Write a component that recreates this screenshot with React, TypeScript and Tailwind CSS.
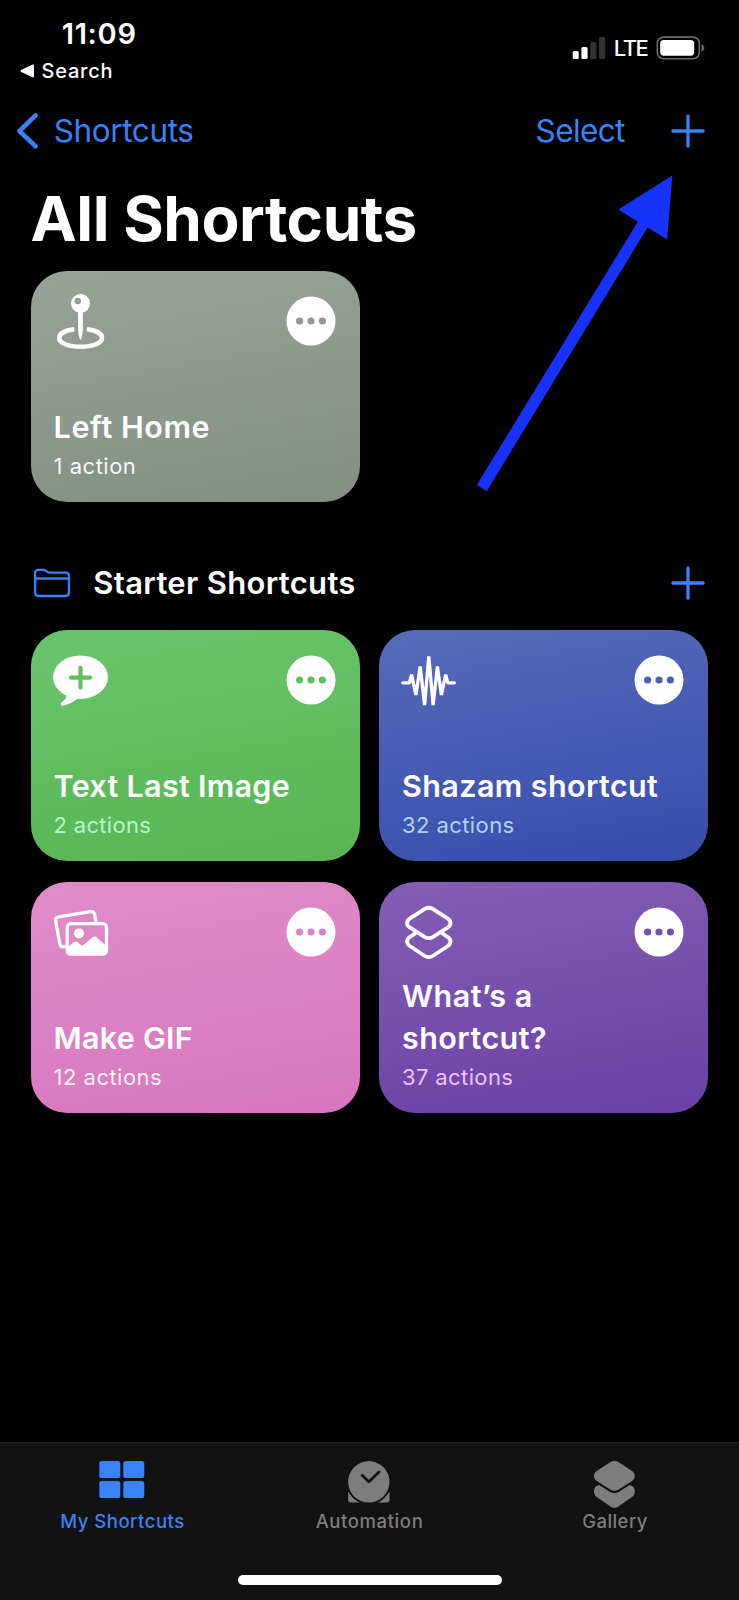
import React from "react";

function PlusIcon() {
  return (
    <svg className="h-[34px] w-[34px] text-[#3a82f7]" viewBox="0 0 34 34" fill="none" stroke="currentColor" strokeWidth="3.3" strokeLinecap="round">
      <path d="M17 1.9V32.1M1.9 17H32.1" />
    </svg>
  );
}

function PinIcon() {
  return (
    <svg className="h-[58px] w-[58px]" viewBox="52 292 58 58">
      <path fillRule="evenodd" fill="#fff" d="M80.5 294a9.5 9.5 0 1 1 0 19a9.5 9.5 0 1 1 0-19ZM77.8 297.8a3.2 3.2 0 1 0 0 6.4a3.2 3.2 0 1 0 0-6.4Z" />
      <path fill="#fff" d="M78.1 311h4.8V327.5C82.9 333 81.8 339.7 80.5 339.7S78.1 333 78.1 327.5Z" />
      <path fill="none" stroke="#fff" strokeWidth="4.5" d="M74.3 329.3C65 330.4 59.2 333.7 59.2 337.9C59.2 343 68.5 346.8 80.6 346.8S102 343 102 337.9C102 333.7 96.2 330.4 86.9 329.3" />
    </svg>
  );
}

function BubbleIcon() {
  return (
    <svg className="h-[58px] w-[58px]" viewBox="52 650.8 58 58">
      <ellipse cx="80.5" cy="677" rx="27.4" ry="21.8" fill="#fff" />
      <path fill="#fff" d="M64 690C69 696.5 65 699 61.4 702.3C59.8 704 61 706.2 64.5 705.3C70 703.8 74.5 700.3 78.5 698L82 692Z" />
      <path fill="none" stroke="#61bf60" strokeWidth="4.2" strokeLinecap="round" d="M80.5 667.7V687.3M70.9 677.4H90.1" />
    </svg>
  );
}

function WaveIcon() {
  return (
    <svg className="h-[58px] w-[58px]" viewBox="400.4 650.8 58 58">
      <path fill="none" stroke="#fff" strokeWidth="3.3" strokeLinecap="round" strokeLinejoin="bevel" d="M403.2 682.6H409.9L412 674.5L416.3 694.8L420.6 666.3L425 704.8L429.2 656.2L433.5 704.8L437.8 666.3L441.8 694.8L446.1 674.5L448.2 682.6H454.7" />
    </svg>
  );
}

function PhotosIcon() {
  return (
    <svg className="h-[58px] w-[58px]" viewBox="52 903 58 58">
      <g fill="none" stroke="#fff" strokeWidth="3.3">
        <path d="M65.5 946.7H63.2C61.2 946.9 60.2 945.7 59.8 943.6L55.7 921.3C55.3 918.7 56.4 917.2 58.7 916.8L90.3 911.7C92.8 911.3 94.2 912.3 94.7 914.6L96 922.5" />
        <rect x="67.2" y="923.6" width="39.3" height="30.6" rx="3.8" />
      </g>
      <circle cx="79" cy="933.4" r="5" fill="#fff" />
      <path fill="#fff" d="M67.2 947.5L73.7 942.2Q75.6 940.8 77.5 942.2L82.3 945.9L92.2 937.4Q94.4 935.8 96.6 937.4L106.5 946V951Q106.5 954.2 103 954.2H70.7Q67.2 954.2 67.2 951Z" />
    </svg>
  );
}

function LayersIcon() {
  return (
    <svg className="h-[58px] w-[58px]" viewBox="400.4 903 58 58">
      <g fill="none" stroke="#fff" strokeWidth="3.8" strokeLinejoin="round">
        <path d="M424.5 909.4C427.4 907.3 431 907.3 433.9 909.4L448.3 918.7C451.8 921 451.8 925 448.3 927.3L433.9 936.6C431 938.5 427.4 938.5 424.5 936.6L410.1 927.3C406.6 925 406.6 921 410.1 918.7Z" />
        <path d="M417.2 932.3L410.1 937.2C406.6 939.5 406.6 943.7 410.1 946L424.5 955.5C427.4 957.5 431 957.5 433.9 955.5L448.3 946C451.8 943.7 451.8 939.5 448.3 937.2L441.2 932.3" />
      </g>
    </svg>
  );
}

interface CardProps {
  icon: React.ReactNode;
  bg: string;
  dots: string;
  sub: string;
  title: React.ReactNode;
  count: string;
}

function Card({ icon, bg, dots, sub, title, count }: CardProps) {
  return (
    <article className={`flex h-[231px] flex-col rounded-[36px] pb-[22px] pl-[23px] pr-[24.2px] ${bg}`}>
      <div className="flex h-[80px] items-start justify-between pt-[21px]">
        <div className="-ml-[1.6px]">{icon}</div>
        <svg className={`mt-[4px] h-[50px] w-[50px] ${dots}`} viewBox="0 0 50 50">
          <circle cx="25" cy="25" r="24.5" fill="#fff" />
          <g fill="currentColor">
            <circle cx="13.6" cy="25" r="3.6" />
            <circle cx="25" cy="25" r="3.6" />
            <circle cx="36.4" cy="25" r="3.6" />
          </g>
        </svg>
      </div>
      <h3 className="mt-auto text-[30.5px] font-semibold leading-[41.5px] text-white">{title}</h3>
      <p className={`mt-[4.6px] text-[22px] leading-[28px] ${sub}`}>{count}</p>
    </article>
  );
}

function StatusBar() {
  return (
    <div className="flex h-[90px] items-start justify-between text-white">
      <div className="flex flex-col">
        <div className="pl-[61.7px] pt-[18px] text-[29px] font-semibold leading-[32px] tracking-[0.7px]">11:09</div>
        <div className="flex items-center pl-[20px] pt-[9px]">
          <svg className="h-[14px] w-[15px]" viewBox="0 0 15 14">
            <path fill="#fff" d="M1.2 6L12.6 .6Q14 .2 14 1.7V12.3Q14 13.8 12.6 13.3L1.2 7.9Q-.2 7 1.2 6Z" />
          </svg>
          <span className="ml-[6.6px] text-[20px] font-medium leading-[24px] tracking-[0.74px]">Search</span>
        </div>
      </div>
      <div className="flex items-center pr-[34px] pt-[33px]">
        <svg className="h-[24px] w-[34px]" viewBox="572 35 34 24">
          <rect x="572.7" y="50" width="6" height="8" rx="1.6" fill="#fff" />
          <rect x="581.4" y="46" width="6.2" height="12" rx="1.6" fill="#fff" />
          <rect x="590.2" y="41" width="6.2" height="17" rx="1.6" fill="#333" />
          <rect x="599" y="36" width="6.2" height="22" rx="1.6" fill="#333" />
        </svg>
        <span className="ml-[7.8px] mt-px w-[35px] text-[22px] font-medium leading-[28px] tracking-[-1.5px]">LTE</span>
        <svg className="ml-[7.2px] h-[24px] w-[49px]" viewBox="656 35 49 24">
          <rect x="657.3" y="36.1" width="42" height="21.6" rx="6.2" fill="none" stroke="#6b6b6b" strokeWidth="1.6" />
          <rect x="660.2" y="39" width="34" height="15.7" rx="3.6" fill="#fff" />
          <path fill="#6b6b6b" d="M701.5 43.3C703.2 44 704.3 45.3 704.3 47S703.2 50 701.5 50.7Z" />
        </svg>
      </div>
    </div>
  );
}

function TabBar() {
  return (
    <nav className="mt-auto flex h-[158px] flex-col border-t border-[#232323] bg-[#121212]">
      <div className="grid grid-cols-3 text-[18.5px] font-medium leading-[24px] text-[#7d7d7d]">
        <div className="flex flex-col items-center pr-[1.5px] pt-[17px] text-[#3a82f7]">
          <svg className="h-[49px] w-[50px]" viewBox="97.7 1460 50 49" fill="currentColor">
            <rect x="100" y="1461" width="21" height="17" rx="2.6" />
            <rect x="124" y="1461" width="21" height="17" rx="2.6" />
            <rect x="100" y="1481" width="21" height="17" rx="2.6" />
            <rect x="124" y="1481" width="21" height="17" rx="2.6" />
          </svg>
          <span className="tracking-[0.51px]">My Shortcuts</span>
        </div>
        <div className="flex flex-col items-center pt-[17px]">
          <svg className="h-[49px] w-[50px]" viewBox="344.5 1460 50 49" fill="currentColor">
            <path d="M348.7 1492V1500.3Q348.7 1502.4 350.8 1502.4H387.9Q390 1502.4 390 1500.3V1492Z" />
            <circle cx="369.3" cy="1481.8" r="22.6" fill="#121212" />
            <circle cx="369.3" cy="1481.8" r="20.7" />
            <path d="M362.6 1475.2L369.3 1481.8L379.6 1472" fill="none" stroke="#121212" strokeWidth="2.7" strokeLinecap="round" strokeLinejoin="round" />
          </svg>
          <span className="tracking-[0.6px]">Automation</span>
        </div>
        <div className="flex flex-col items-center pr-[1.5px] pt-[17px]">
          <svg className="h-[49px] w-[50px]" viewBox="590.8 1460 50 49" fill="currentColor">
            <path d="M610.9 1506.2C613.4 1508.3 617 1508.3 619.5 1506.2L632.8 1497.1C636.5 1494.5 636.5 1488.5 633.2 1486L630 1485L615.2 1488L600.4 1485L597.2 1486C593.9 1488.5 593.9 1494.5 597.6 1497.1Z" />
            <path stroke="#121212" strokeWidth="4" d="M610.9 1462.3C613.4 1460.6 617 1460.6 619.5 1462.3L632.8 1471C636.5 1473.6 636.5 1478.4 632.8 1481L619.5 1489.5C617 1491.2 613.4 1491.2 610.9 1489.5L597.6 1481C593.9 1478.4 593.9 1473.6 597.6 1471Z" />
            <path d="M610.9 1462.3C613.4 1460.6 617 1460.6 619.5 1462.3L632.8 1471C636.5 1473.6 636.5 1478.4 632.8 1481L619.5 1489.5C617 1491.2 613.4 1491.2 610.9 1489.5L597.6 1481C593.9 1478.4 593.9 1473.6 597.6 1471Z" />
          </svg>
          <span className="tracking-[0.4px]">Gallery</span>
        </div>
      </div>
      <div className="mx-auto mb-[15px] mt-auto h-[10px] w-[264px] rounded-full bg-white" />
    </nav>
  );
}

export default function App() {
  return (
    <div className="relative flex h-[1600px] w-[739px] flex-col overflow-hidden bg-black font-['Inter',sans-serif]">
      <StatusBar />

      <header className="flex h-[82px] items-center justify-between pl-[16px] pr-[34px] text-[31.5px] text-[#3a82f7]">
        <div className="flex items-center">
          <svg className="h-[38px] w-[24px]" viewBox="16 112 24 38" fill="none" stroke="currentColor" strokeWidth="4.6" strokeLinecap="round" strokeLinejoin="round">
            <path d="M35.6 115.4L19.4 131L35.6 146.4" />
          </svg>
          <span className="ml-[13.7px] tracking-[-0.38px]">Shortcuts</span>
        </div>
        <div className="flex items-center">
          <span className="mr-[46.2px] tracking-[-0.6px]">Select</span>
          <PlusIcon />
        </div>
      </header>

      <h1 className="-mt-[1px] h-[100px] whitespace-nowrap pl-[30.5px] pt-[11px] text-[62px] font-bold leading-[74px] tracking-[-0.47px] text-white">All Shortcuts</h1>

      <div className="grid grid-cols-2 gap-x-[19px] px-[30.6px]">
        <Card
          icon={<PinIcon />}
          bg="bg-[linear-gradient(170deg,#98a299_0%,#848f83_100%)]"
          dots="text-[#909a91]"
          sub="text-[#f6f8f6] tracking-[0.5px]"
          title={<span className="tracking-[0.6px]">Left Home</span>}
          count="1 action"
        />
      </div>

      <section>
        <div className="flex h-[128px] items-center justify-between pl-[33px] pr-[34.3px] pt-[33px]">
          <div className="flex items-center">
            <svg className="h-[30px] w-[38px] text-[#3a82f7]" viewBox="33 568 38 30" fill="none" stroke="currentColor" strokeWidth="2.3" strokeLinejoin="round">
              <path d="M35.1 592.2V573.2Q35.1 569.8 38.5 569.8H43Q44.8 569.8 46 570.8L47.3 571.9Q48.3 572.6 50 572.6H65.6Q69 572.6 69 576V592.6Q69 596 65.6 596H38.5Q35.1 596 35.1 592.6Z" />
              <path d="M35.1 578.5H69" />
            </svg>
            <h2 className="ml-[22.3px] text-[31px] font-semibold leading-[40px] tracking-[0.3px] text-white">Starter Shortcuts</h2>
          </div>
          <PlusIcon />
        </div>
        <div className="grid grid-cols-2 gap-x-[19px] gap-y-[21px] px-[30.6px]">
          <Card
            icon={<BubbleIcon />}
            bg="bg-[linear-gradient(170deg,#6ac46d_0%,#57b652_100%)]"
            dots="text-[#61bf60]"
            sub="text-[#b5f7cd] tracking-[0.3px]"
            title={<span className="tracking-[0.3px]">Text Last Image</span>}
            count="2 actions"
          />
          <Card
            icon={<WaveIcon />}
            bg="bg-[linear-gradient(170deg,#566bb9_0%,#374dac_100%)]"
            dots="text-[#4a60b4]"
            sub="text-[#b4d3fa] tracking-[0.42px]"
            title={<span className="tracking-[0.4px]">Shazam shortcut</span>}
            count="32 actions"
          />
          <Card
            icon={<PhotosIcon />}
            bg="bg-[linear-gradient(170deg,#df8cc9_0%,#d876be_100%)]"
            dots="text-[#db82c5]"
            sub="text-[#fff3fd] tracking-[0.47px]"
            title={<span className="tracking-[0.27px]">Make GIF</span>}
            count="12 actions"
          />
          <Card
            icon={<LayersIcon />}
            bg="bg-[linear-gradient(170deg,#845eb4_0%,#6a40a6_100%)]"
            dots="text-[#7750af]"
            sub="text-[#ebc3f9] tracking-[0.38px]"
            title={<span className="tracking-[0.45px]">What’s a<br />shortcut?</span>}
            count="37 actions"
          />
        </div>
      </section>

      <TabBar />

      <svg className="pointer-events-none absolute left-[470px] top-[170px] h-[330px] w-[210px]" viewBox="470 170 210 330">
        <path fill="#1733f9" d="M672.3 175.5L667.2 239.5L647.5 227.6L486.7 491.2L476.8 485L637.8 221.7L618.3 209.6Z" />
      </svg>
    </div>
  );
}
